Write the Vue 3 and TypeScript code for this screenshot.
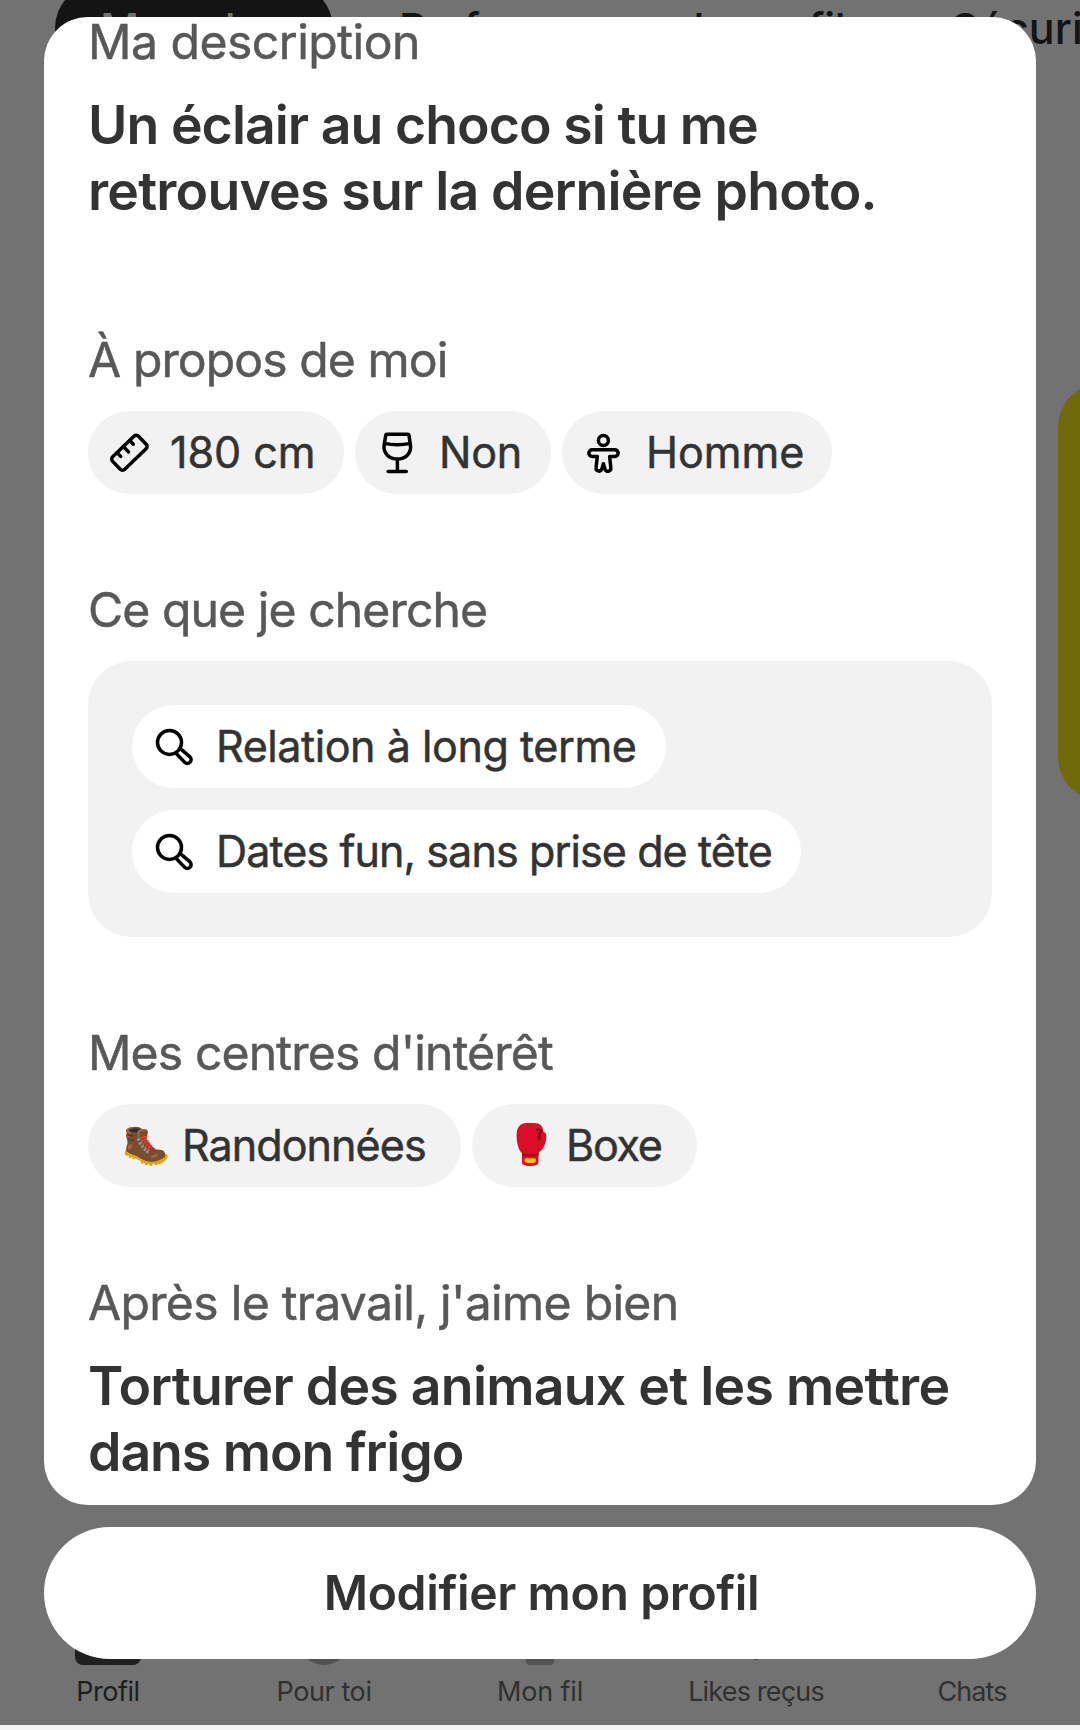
<script setup lang="ts">
interface Chip { icon: string; label: string; width: number; spacing: number }
interface NavItem { label: string; shape: string; spacing: number; active?: boolean }

const about: Chip[] = [
  { icon: 'ruler', label: '180 cm', width: 256, spacing: -0.05 },
  { icon: 'glass', label: 'Non', width: 196, spacing: -0.3 },
  { icon: 'person', label: 'Homme', width: 270, spacing: 0 },
]
const lookingFor: Chip[] = [
  { icon: 'search', label: 'Relation à long terme', width: 534, spacing: -0.46 },
  { icon: 'search', label: 'Dates fun, sans prise de tête', width: 669, spacing: -0.92 },
]
const interests: Chip[] = [
  { icon: '🥾', label: 'Randonnées', width: 373, spacing: -0.96 },
  { icon: '🥊', label: 'Boxe', width: 225, spacing: -1.3 },
]
const nav: NavItem[] = [
  { label: 'Profil', shape: 'card', spacing: -0.48, active: true },
  { label: 'Pour toi', shape: 'disc', spacing: -0.4 },
  { label: 'Mon fil', shape: 'block', spacing: -0.16 },
  { label: 'Likes reçus', shape: 'heart', spacing: -0.82 },
  { label: 'Chats', shape: 'bubble', spacing: -0.9 },
]
</script>

<template>
  <div class="screen">
    <div class="backdrop">
      <div class="tabs">
        <span class="tab selected">Mon plan</span>
        <span class="tab perf">Performances <span class="tail">du profil</span></span>
        <span class="tab safety">Sécurité</span>
      </div>
      <div class="promo"></div>
      <nav class="nav">
        <div v-for="n in nav" :key="n.label" class="nav-item" :class="{ active: n.active }">
          <i class="shape" :class="n.shape"></i>
          <span :style="{ letterSpacing: n.spacing + 'px' }">{{ n.label }}</span>
        </div>
      </nav>
      <div class="strip"></div>
    </div>

    <div class="overlay">
      <main class="modal">
        <section class="first">
          <h2 class="t-desc">Ma description</h2>
          <p><span class="l1">Un éclair au choco si tu me</span><br><span class="l2">retrouves sur la dernière photo.</span></p>
        </section>

        <section class="about">
          <h2 class="t-about">À propos de moi</h2>
          <div class="chips">
            <div v-for="c in about" :key="c.label" class="chip" :class="c.icon" :style="{ width: c.width + 'px', letterSpacing: c.spacing + 'px' }">
              <svg v-if="c.icon === 'ruler'" class="icon" viewBox="0 0 44 44">
                <g transform="translate(21.4 22.8) rotate(-44)">
                  <rect x="-18" y="-8.7" width="36" height="17.4" rx="3.2" />
                  <path d="M-8.8 -8.7v5.2M0 -8.7v7.4M8.8 -8.7v5.2" />
                </g>
              </svg>
              <svg v-else-if="c.icon === 'glass'" class="icon" viewBox="0 0 44 44">
                <path d="M12.2 4.2H32.6a1.4 1.4 0 0 1 1.4 1.2L35.5 15.6C36.6 23.2 30.3 29 22.4 29S8 23.2 9.1 15.6L10.7 5.4a1.4 1.4 0 0 1 1.5-1.2ZM9.5 13.4Q22.4 16 35.2 13.4M22.4 29V41.4M13.1 41.6H31.3" />
              </svg>
              <svg v-else class="icon" viewBox="0 0 44 44">
                <circle cx="21.4" cy="10.4" r="5" />
                <path d="M10.2 19.7H32.8a3.3 3.3 0 0 1 0 6.7H27.6L28.8 37.4A3 3 0 0 1 23 39.2L21.4 33.8L19.8 39.2A3 3 0 0 1 14.1 37.4L15.3 26.4H10.2a3.3 3.3 0 0 1 0-6.7Z" />
              </svg>
              {{ c.label }}
            </div>
          </div>
        </section>

        <section class="looking">
          <h2 class="t-look">Ce que je cherche</h2>
          <div class="panel">
            <div v-for="c in lookingFor" :key="c.label" class="chip white" :style="{ width: c.width + 'px', letterSpacing: c.spacing + 'px' }">
              <svg class="icon" viewBox="0 0 44 44">
                <circle cx="17.5" cy="18.4" r="12" />
                <path d="M28.9 25.2L38 32.9A3.8 3.8 0 0 1 33 38.6L24.9 30.2" />
              </svg>
              {{ c.label }}
            </div>
          </div>
        </section>

        <section class="interests">
          <h2 class="t-int">Mes centres d'intérêt</h2>
          <div class="chips">
            <div v-for="c in interests" :key="c.label" class="chip emoji-chip" :style="{ width: c.width + 'px', letterSpacing: c.spacing + 'px' }">
              <span class="emoji">{{ c.icon }}</span>{{ c.label }}
            </div>
          </div>
        </section>

        <section class="after">
          <h2 class="t-after">Après le travail, j'aime bien</h2>
          <p><span class="l3">Torturer des animaux et les mettre</span><br><span class="l4">dans mon frigo</span></p>
        </section>
      </main>
      <button class="edit">Modifier mon profil</button>
    </div>
  </div>
</template>

<style>
body { margin: 0; }
</style>

<style scoped>
.screen {
  display: grid;
  width: 1080px;
  height: 1730px;
  overflow: hidden;
  background: #727272;
  font-family: Inter, "Liberation Sans", sans-serif;
}
.backdrop, .overlay { grid-area: 1 / 1; min-width: 0; height: 1730px; box-sizing: border-box; display: flex; flex-direction: column; }
.backdrop { overflow: hidden; }
.tabs { display: flex; margin: -16px 0 0 55px; height: 88px; flex: none; }
.tab { flex: none; font-size: 43px; font-weight: 500; line-height: 88px; color: #141414; white-space: nowrap; letter-spacing: -0.7px; }
.tab.selected { box-sizing: border-box; width: 278px; padding-left: 45px; border-radius: 44px; background: #141414; color: #727272; letter-spacing: -0.9px; }
.tab.perf { width: 552px; padding-left: 66px; letter-spacing: -1.75px; }
.tail { letter-spacing: -0.3px; }
.tab.safety { letter-spacing: 0; }
.promo { flex: none; width: 200px; height: 418px; margin: 311px 0 0 1058px; border-radius: 44px; background: #6f690c; }
.nav { display: flex; margin-top: auto; height: 120px; }
.nav-item { flex: 1; display: flex; flex-direction: column; align-items: center; font-size: 27px; line-height: 30px; color: #303030; }
.nav-item.active { color: #1e1e1e; }
.shape { display: block; margin: 0 0 12px; height: 60px; }
.shape.card { width: 66px; border-radius: 8px; background: #202020; }
.shape.disc { width: 50px; height: 50px; margin-top: 10px; border-radius: 50%; background: #505050; }
.shape.block { width: 28px; border-radius: 4px; background: #525252; }
.shape.heart { width: 8px; height: 55px; margin-bottom: 17px; border-radius: 4px; background: #484848; }
.shape.bubble { width: 26px; height: 54px; margin-bottom: 18px; border-radius: 8px; background: #484848; }
.strip { flex: none; height: 5px; background: #f5f5f5; }

.overlay { padding: 17px 44px 0; gap: 22px; z-index: 1; }
.modal { height: 1488px; flex: none; box-sizing: border-box; padding: 0 44px; border-radius: 44px; background: #fff; overflow: hidden; }
h2 { margin: 0; font-size: 48.1px; font-weight: 400; line-height: 62px; color: #585858; white-space: nowrap; -webkit-text-stroke: 0.5px #585858; }
p { margin: 19px 0 0; font-size: 53.6px; font-weight: 600; line-height: 66px; color: #333; white-space: nowrap; }
.first { margin-top: -6px; }
.about { margin-top: 105px; }
.looking, .interests, .after { margin-top: 85px; }
.chips { display: flex; gap: 11px; margin-top: 20px; }
.chip { box-sizing: border-box; display: flex; align-items: center; gap: 20px; height: 83px; padding: 0 0 2px 20px; border-radius: 41.5px; background: #f2f2f2; font-size: 43.1px; font-weight: 400; color: #333; white-space: nowrap; line-height: 80px; -webkit-text-stroke: 0.5px #333; }
.chip.ruler { gap: 18px; }
.chip.white { background: #fff; }
.icon { flex: none; width: 44px; height: 44px; fill: none; stroke: #000; stroke-width: 3.5; stroke-linecap: round; stroke-linejoin: round; }
.chip.emoji-chip { padding-left: 35px; gap: 12px; }
.emoji { display: flex; justify-content: center; width: 47px; font-family: "Noto Color Emoji", sans-serif; font-size: 39px; letter-spacing: 0; -webkit-text-stroke: 0; }
.panel { display: flex; flex-direction: column; gap: 22px; margin-top: 20px; height: 276px; box-sizing: border-box; padding: 44px; border-radius: 44px; background: #f2f2f2; }
.edit { flex: none; height: 132px; border: 0; padding: 0 0 0 3px; border-radius: 66px; background: #fff; color: #333; font: 600 48.1px/132px Inter, "Liberation Sans", sans-serif; letter-spacing: -0.4px; }
.t-desc { letter-spacing: -0.5px; }
.t-about { letter-spacing: -0.91px; }
.t-look { letter-spacing: -0.91px; }
.t-int { letter-spacing: -0.85px; }
.t-after { letter-spacing: -0.7px; }
.l1 { letter-spacing: -0.95px; }
.l2 { letter-spacing: -0.8px; }
.l3 { letter-spacing: -0.74px; }
.l4 { letter-spacing: -1.05px; }
</style>
